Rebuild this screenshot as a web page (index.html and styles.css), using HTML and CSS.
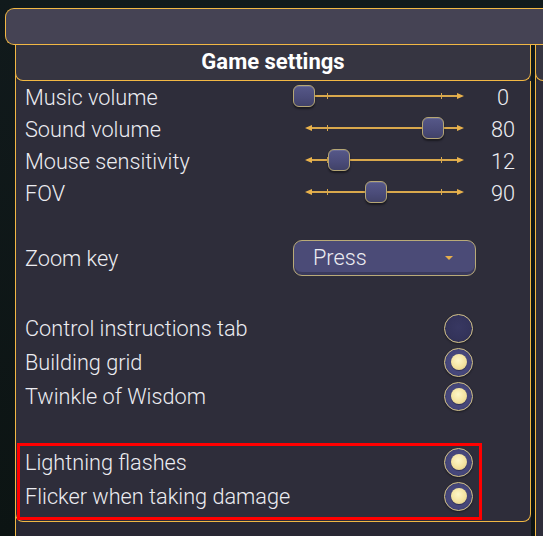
FILE: index.html
```html
<!DOCTYPE html>
<html lang="en">
<head>
    <meta charset="UTF-8">
    <meta name="viewport" content="width=device-width, initial-scale=1.0">
    <title>Game settings</title>
    <link rel="stylesheet" href="styles.css">
</head>
<body>
    <div class="screen">
        <div class="topbar"></div>

        <div class="columns">
            <section class="panel">
                <h2 class="panel-title">Game settings</h2>
                <div class="panel-body">
                    <div class="group">
                        <div class="row">
                            <span class="label">Music volume</span>
                            <div class="slider"><span class="tick tick-a"></span><span class="tick tick-b"></span><span class="thumb" style="left: 2px"></span></div>
                            <span class="value">0</span>
                        </div>
                        <div class="row">
                            <span class="label">Sound volume</span>
                            <div class="slider"><span class="tick tick-a"></span><span class="tick tick-b"></span><span class="thumb" style="left: 131px"></span></div>
                            <span class="value">80</span>
                        </div>
                        <div class="row">
                            <span class="label">Mouse sensitivity</span>
                            <div class="slider"><span class="tick tick-a"></span><span class="tick tick-b"></span><span class="thumb" style="left: 37px"></span></div>
                            <span class="value">12</span>
                        </div>
                        <div class="row">
                            <span class="label">FOV</span>
                            <div class="slider"><span class="tick tick-a"></span><span class="tick tick-b"></span><span class="thumb" style="left: 74px"></span></div>
                            <span class="value">90</span>
                        </div>
                    </div>

                    <div class="group group-select">
                        <div class="row row-select">
                            <span class="label">Zoom key</span>
                            <div class="select">Press<span class="caret"></span></div>
                        </div>
                    </div>

                    <div class="group group-toggles">
                        <div class="row row-toggle">
                            <span class="label">Control instructions tab</span>
                            <span class="toggle"></span>
                        </div>
                        <div class="row row-toggle">
                            <span class="label">Building grid</span>
                            <span class="toggle on"></span>
                        </div>
                        <div class="row row-toggle">
                            <span class="label">Twinkle of Wisdom</span>
                            <span class="toggle on"></span>
                        </div>
                    </div>

                    <div class="group group-toggles group-last">
                        <div class="row row-toggle">
                            <span class="label">Lightning flashes</span>
                            <span class="toggle on"></span>
                        </div>
                        <div class="row row-toggle">
                            <span class="label">Flicker when taking damage</span>
                            <span class="toggle on"></span>
                        </div>
                    </div>
                </div>
            </section>

            <section class="panel panel-next">
                <div class="panel-title"></div>
                <div class="panel-body"></div>
            </section>
        </div>

        <div class="highlight"></div>
    </div>
</body>
</html>
```

FILE: styles.css
```css
body {
    margin: 0;
    background-color: #0d1416;
    font-family: Roboto, "Liberation Sans", sans-serif;
    overflow: hidden;
}

.screen {
    position: relative;
    width: 543px;
    height: 536px;
    overflow: hidden;
    background: linear-gradient(180deg, #111a1c 0%, #0c1413 100%);
}

.topbar {
    margin: 8px 0 0 5px;
    width: 560px;
    height: 35px;
    background-color: #454354;
    border: 1px solid #f2b844;
    border-right: none;
    border-radius: 9px 0 0 9px;
}

.columns {
    display: flex;
    gap: 4px;
    margin-left: 15px;
    height: 491px;
}

.panel {
    flex: 0 0 515px;
    border-left: 1px solid #f2b844;
    background-color: #282733;
}

.panel-title {
    margin: 0 0 0 -1px;
    height: 35px;
    line-height: 34px;
    background-color: #363541;
    border: 1px solid #f2b844;
    border-top: none;
    border-radius: 0 0 8px 8px;
    color: #fff;
    font-size: 22px;
    font-weight: 700;
    text-align: center;
}

.panel-body {
    margin-left: -1px;
    height: 440px;
    padding: 0 7px 0 8px;
    background-color: #2e2d3a;
    border: 1px solid #f2b844;
    border-top: none;
    border-radius: 0 0 8px 8px;
}

.panel-next {
    flex: 0 0 40px;
}

.panel-next .panel-body {
    height: 500px;
    border-right: none;
    border-bottom: none;
}

.row {
    display: flex;
    align-items: center;
    height: 32px;
    color: #ececf1;
    font-size: 21.7px;
    font-weight: 300;
}

.label {
    flex: 1;
    padding-left: 1px;
    padding-top: 1px;
}

.group-select {
    margin-top: 31px;
}

.row-select {
    height: 36px;
}

.group-toggles {
    margin-top: 35px;
}

.group-last {
    margin-top: 32px;
}

.row-toggle {
    height: 34px;
}

/* slider */
.slider {
    position: relative;
    width: 176px;
    height: 32px;
}

.slider::before {
    content: "";
    position: absolute;
    left: 16px;
    right: 6px;
    top: 14px;
    height: 2px;
    background-color: #d9a84c;
}

.slider::after {
    content: "";
    position: absolute;
    right: 3px;
    top: 12px;
    border-left: 7px solid #e9b24c;
    border-top: 3px solid transparent;
    border-bottom: 3px solid transparent;
}

.tick {
    position: absolute;
    top: 12px;
    width: 1px;
    height: 6px;
    background-color: #d9a84c;
}

.tick-a {
    left: 36px;
}

.tick-b {
    left: 150px;
}

.slider .tick-a::before {
    content: "";
    position: absolute;
    left: -22px;
    top: 0;
    border-right: 7px solid #e9b24c;
    border-top: 3px solid transparent;
    border-bottom: 3px solid transparent;
}

.thumb {
    position: absolute;
    top: 4px;
    width: 20px;
    height: 20px;
    border: 1px solid #b5a675;
    border-radius: 6px;
    background: linear-gradient(180deg, #565889 0%, #4a4b78 60%, #414268 100%);
    box-shadow: 0 2px 2px rgba(0, 0, 0, 0.45), inset 0 1px 0 rgba(255, 255, 255, 0.12);
    z-index: 1;
}

.value {
    width: 40px;
    margin-left: 16px;
    text-align: center;
}

/* dropdown */
.select {
    position: relative;
    width: 162px;
    height: 34px;
    margin-right: 47px;
    padding-left: 19px;
    line-height: 33px;
    border: 1px solid #b9aa78;
    border-radius: 9px;
    background-color: #4b4b77;
    box-shadow: inset 0 -3px 0 rgba(0, 0, 0, 0.22);
}

.caret {
    position: absolute;
    right: 22px;
    top: 15px;
    border-top: 4px solid #e6ae4a;
    border-left: 4px solid transparent;
    border-right: 4px solid transparent;
}

/* toggle */
.toggle {
    position: relative;
    width: 27px;
    height: 27px;
    margin-right: 50px;
    border: 1.5px solid #d5c48b;
    border-radius: 50%;
    background: radial-gradient(circle at 50% 45%, #383862 0%, #33335a 60%, #2b2b4c 100%);
    box-shadow: 0 1px 2px rgba(0, 0, 0, 0.4);
}

.toggle.on {
    background: radial-gradient(circle at 50% 50%, #4e4f80 0%, #45467a 60%, #35365e 100%);
}

.toggle.on::after {
    content: "";
    position: absolute;
    left: 5.5px;
    top: 5.5px;
    width: 16px;
    height: 16px;
    border-radius: 50%;
    background: radial-gradient(circle at 45% 40%, #fdf6c8 0%, #f3e3a0 55%, #d9c47c 100%);
    box-shadow: 0 1px 1px rgba(0, 0, 0, 0.35);
}

/* review highlight drawn over the screenshot */
.highlight {
    position: absolute;
    left: 17px;
    top: 443px;
    width: 459px;
    height: 71px;
    border: 3px solid #ff0000;
}
```
